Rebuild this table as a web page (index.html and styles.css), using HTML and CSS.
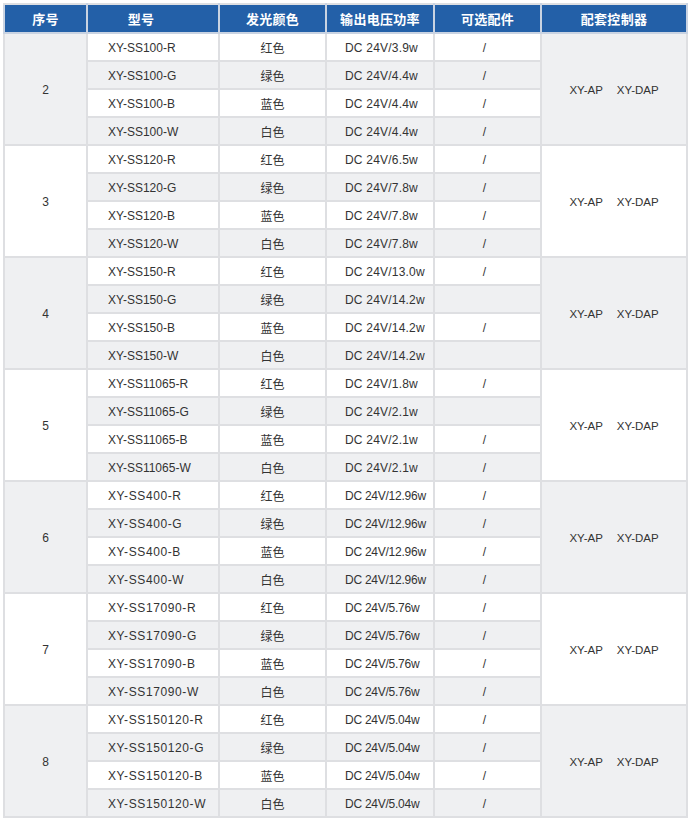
FILE: index.html
```html
<!DOCTYPE html>
<html lang="zh-CN">
<head>
<meta charset="utf-8">
<title>产品参数表</title>
<link rel="stylesheet" href="styles.css">
</head>
<body>
<table class="spec">
  <colgroup>
    <col class="c-no"><col class="c-model"><col class="c-color"><col class="c-volt"><col class="c-acc"><col class="c-ctrl">
  </colgroup>
  <thead>
    <tr>
      <th>序号</th><th class="th-model">型号</th><th>发光颜色</th><th>输出电压功率</th><th>可选配件</th><th>配套控制器</th>
    </tr>
  </thead>
  <tbody class="g-even">
    <tr><td class="no" rowspan="4">2</td><td class="model">XY-SS100-R</td><td class="color">红色</td><td class="volt">DC 24V/3.9w</td><td class="acc">/</td><td class="ctrl" rowspan="4"><span>XY-AP</span><span>XY-DAP</span></td></tr>
    <tr class="alt"><td class="model">XY-SS100-G</td><td class="color">绿色</td><td class="volt">DC 24V/4.4w</td><td class="acc">/</td></tr>
    <tr><td class="model">XY-SS100-B</td><td class="color">蓝色</td><td class="volt">DC 24V/4.4w</td><td class="acc">/</td></tr>
    <tr class="alt"><td class="model">XY-SS100-W</td><td class="color">白色</td><td class="volt">DC 24V/4.4w</td><td class="acc">/</td></tr>
  </tbody>
  <tbody class="g-odd">
    <tr><td class="no" rowspan="4">3</td><td class="model">XY-SS120-R</td><td class="color">红色</td><td class="volt">DC 24V/6.5w</td><td class="acc">/</td><td class="ctrl" rowspan="4"><span>XY-AP</span><span>XY-DAP</span></td></tr>
    <tr class="alt"><td class="model">XY-SS120-G</td><td class="color">绿色</td><td class="volt">DC 24V/7.8w</td><td class="acc">/</td></tr>
    <tr><td class="model">XY-SS120-B</td><td class="color">蓝色</td><td class="volt">DC 24V/7.8w</td><td class="acc">/</td></tr>
    <tr class="alt"><td class="model">XY-SS120-W</td><td class="color">白色</td><td class="volt">DC 24V/7.8w</td><td class="acc">/</td></tr>
  </tbody>
  <tbody class="g-even">
    <tr><td class="no" rowspan="4">4</td><td class="model">XY-SS150-R</td><td class="color">红色</td><td class="volt">DC 24V/13.0w</td><td class="acc">/</td><td class="ctrl" rowspan="4"><span>XY-AP</span><span>XY-DAP</span></td></tr>
    <tr class="alt"><td class="model">XY-SS150-G</td><td class="color">绿色</td><td class="volt">DC 24V/14.2w</td><td class="acc"></td></tr>
    <tr><td class="model">XY-SS150-B</td><td class="color">蓝色</td><td class="volt">DC 24V/14.2w</td><td class="acc">/</td></tr>
    <tr class="alt"><td class="model">XY-SS150-W</td><td class="color">白色</td><td class="volt">DC 24V/14.2w</td><td class="acc"></td></tr>
  </tbody>
  <tbody class="g-odd">
    <tr><td class="no" rowspan="4">5</td><td class="model">XY-SS11065-R</td><td class="color">红色</td><td class="volt">DC 24V/1.8w</td><td class="acc">/</td><td class="ctrl" rowspan="4"><span>XY-AP</span><span>XY-DAP</span></td></tr>
    <tr class="alt"><td class="model">XY-SS11065-G</td><td class="color">绿色</td><td class="volt">DC 24V/2.1w</td><td class="acc"></td></tr>
    <tr><td class="model">XY-SS11065-B</td><td class="color">蓝色</td><td class="volt">DC 24V/2.1w</td><td class="acc">/</td></tr>
    <tr class="alt"><td class="model">XY-SS11065-W</td><td class="color">白色</td><td class="volt">DC 24V/2.1w</td><td class="acc">/</td></tr>
  </tbody>
  <tbody class="g-even wide">
    <tr><td class="no" rowspan="4">6</td><td class="model">XY-SS400-R</td><td class="color">红色</td><td class="volt">DC 24V/12.96w</td><td class="acc">/</td><td class="ctrl" rowspan="4"><span>XY-AP</span><span>XY-DAP</span></td></tr>
    <tr class="alt"><td class="model">XY-SS400-G</td><td class="color">绿色</td><td class="volt">DC 24V/12.96w</td><td class="acc">/</td></tr>
    <tr><td class="model">XY-SS400-B</td><td class="color">蓝色</td><td class="volt">DC 24V/12.96w</td><td class="acc">/</td></tr>
    <tr class="alt"><td class="model">XY-SS400-W</td><td class="color">白色</td><td class="volt">DC 24V/12.96w</td><td class="acc">/</td></tr>
  </tbody>
  <tbody class="g-odd wide">
    <tr><td class="no" rowspan="4">7</td><td class="model">XY-SS17090-R</td><td class="color">红色</td><td class="volt">DC 24V/5.76w</td><td class="acc">/</td><td class="ctrl" rowspan="4"><span>XY-AP</span><span>XY-DAP</span></td></tr>
    <tr class="alt"><td class="model">XY-SS17090-G</td><td class="color">绿色</td><td class="volt">DC 24V/5.76w</td><td class="acc">/</td></tr>
    <tr><td class="model">XY-SS17090-B</td><td class="color">蓝色</td><td class="volt">DC 24V/5.76w</td><td class="acc">/</td></tr>
    <tr class="alt"><td class="model">XY-SS17090-W</td><td class="color">白色</td><td class="volt">DC 24V/5.76w</td><td class="acc">/</td></tr>
  </tbody>
  <tbody class="g-even wide">
    <tr><td class="no" rowspan="4">8</td><td class="model">XY-SS150120-R</td><td class="color">红色</td><td class="volt">DC 24V/5.04w</td><td class="acc">/</td><td class="ctrl" rowspan="4"><span>XY-AP</span><span>XY-DAP</span></td></tr>
    <tr class="alt"><td class="model">XY-SS150120-G</td><td class="color">绿色</td><td class="volt">DC 24V/5.04w</td><td class="acc">/</td></tr>
    <tr><td class="model">XY-SS150120-B</td><td class="color">蓝色</td><td class="volt">DC 24V/5.04w</td><td class="acc">/</td></tr>
    <tr class="alt"><td class="model">XY-SS150120-W</td><td class="color">白色</td><td class="volt">DC 24V/5.04w</td><td class="acc">/</td></tr>
  </tbody>
</table>
</body>
</html>
```

FILE: styles.css
```css
html, body {
  margin: 0;
  padding: 0;
  background: #ffffff;
}
body {
  padding: 3px 0 0 3px;
  font-family: "Liberation Sans", Arial, "Noto Sans CJK SC", sans-serif;
  color: #333333;
}
.spec {
  border-collapse: collapse;
  table-layout: fixed;
  width: 685px;
  border: 2px solid #dedfe2;
}
.c-no { width: 83px; }
.c-model { width: 132px; }
.c-color { width: 107px; }
.c-volt { width: 108px; }
.c-acc { width: 107px; }
.c-ctrl { width: 146px; }

.spec th,
.spec td {
  border: 2px solid #dedfe2;
  padding: 0;
  line-height: 14px;
  font-size: 12px;
  text-align: center;
  vertical-align: middle;
  white-space: nowrap;
}
.spec td {
  height: 24px;
  padding-top: 2px;
}
.spec thead th {
  background: #2360a8;
  color: #ffffff;
  font-family: "Noto Sans CJK SC", sans-serif;
  font-weight: 700;
  font-size: 13px;
  letter-spacing: 0.3px;
  height: 27px;
  border-color: #c9d3e2;
  border-top-color: #dedfe2;
}
.spec thead th:first-child { border-left-color: #c9d3e2; }
.spec .th-model { padding-right: 24px; }

.spec tr { background: #ffffff; }
.spec tr.alt { background: #eff0f2; }
.g-even .no, .g-even .ctrl { background: #eff0f2; }
.g-odd .no, .g-odd .ctrl { background: #ffffff; }

.spec .model {
  text-align: left;
  padding-left: 20px;
}
.spec .wide .model { letter-spacing: 0.6px; }
.spec .color {
  font-family: "Noto Sans CJK SC", sans-serif;
  color: #333333;
}
.spec .volt {
  text-align: left;
  padding-left: 18px;
  letter-spacing: 0.2px;
}
.spec .wide .volt { letter-spacing: -0.25px; }
.spec .acc { padding-right: 6px; }
.spec .ctrl { font-size: 11.5px; }
.ctrl span + span { margin-left: 14px; }
```
